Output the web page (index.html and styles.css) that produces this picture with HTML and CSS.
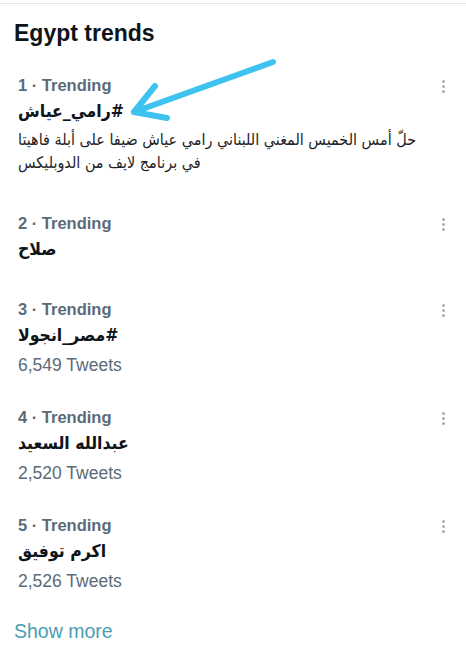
FILE: index.html
```html
<!DOCTYPE html>
<html lang="en">
<head>
  <meta charset="UTF-8">
  <meta name="viewport" content="width=device-width, initial-scale=1.0">
  <title>Egypt trends</title>
  <link rel="stylesheet" href="styles.css">
</head>
<body>
  <div class="topline"></div>

  <section class="panel">
    <h2 class="panel-title">Egypt trends</h2>

    <div class="trend">
      <div class="trend-body">
        <div class="trend-meta">1 · Trending</div>
        <div class="trend-name" dir="rtl">#رامي_عياش</div>
        <div class="trend-desc" dir="rtl">حلّ أمس الخميس المغني اللبناني رامي عياش ضيفا على أبلة فاهيتا في برنامج لايف من الدوبليكس</div>
      </div>
      <div class="trend-more"><span></span><span></span><span></span></div>
    </div>

    <div class="trend">
      <div class="trend-body">
        <div class="trend-meta">2 · Trending</div>
        <div class="trend-name" dir="rtl">صلاح</div>
      </div>
      <div class="trend-more"><span></span><span></span><span></span></div>
    </div>

    <div class="trend">
      <div class="trend-body">
        <div class="trend-meta">3 · Trending</div>
        <div class="trend-name" dir="rtl">#مصر_انجولا</div>
        <div class="trend-count">6,549 Tweets</div>
      </div>
      <div class="trend-more"><span></span><span></span><span></span></div>
    </div>

    <div class="trend">
      <div class="trend-body">
        <div class="trend-meta">4 · Trending</div>
        <div class="trend-name" dir="rtl">عبدالله السعيد</div>
        <div class="trend-count">2,520 Tweets</div>
      </div>
      <div class="trend-more"><span></span><span></span><span></span></div>
    </div>

    <div class="trend">
      <div class="trend-body">
        <div class="trend-meta">5 · Trending</div>
        <div class="trend-name" dir="rtl">اكرم توفيق</div>
        <div class="trend-count">2,526 Tweets</div>
      </div>
      <div class="trend-more"><span></span><span></span><span></span></div>
    </div>

    <a class="show-more" href="#">Show more</a>
  </section>

  <!-- hand drawn arrow on top of the screenshot -->
  <svg class="arrow" width="466" height="663" viewBox="0 0 466 663">
    <g fill="none" stroke="#3ec3f0" stroke-width="6" stroke-linecap="round" stroke-linejoin="round">
      <path d="M273 62 L134 112"/>
      <path d="M155 86 L134 112 L167 118"/>
    </g>
  </svg>
</body>
</html>
```

FILE: styles.css
```css
body {
  margin: 0;
  background: #fff;
  font-family: "Liberation Sans", "DejaVu Sans", sans-serif;
  color: #0f1419;
  position: relative;
  overflow: hidden;
}

.topline {
  margin-top: 3px;
  height: 1px;
  background: #e1e6e9;
}

.panel {
  display: flex;
  flex-direction: column;
}

.panel-title {
  margin: 15px 0 9px;
  padding: 0 14px;
  font-size: 23px;
  line-height: 28px;
  font-weight: bold;
  color: #0f1419;
}

.trend {
  display: flex;
  justify-content: space-between;
  padding: 17px 18px 14px 18px;
}

.trend-body {
  display: flex;
  flex-direction: column;
  flex: 1;
}

.trend-meta {
  font-size: 16.5px;
  line-height: 24px;
  font-weight: bold;
  color: #5b6b78;
}

.trend-name,
.trend-desc {
  font-family: "DejaVu Sans Condensed", "DejaVu Sans", sans-serif;
  text-align: left;
}

.trend-name {
  font-size: 17.5px;
  line-height: 28px;
  font-weight: bold;
  color: #0f1419;
}

.trend-name:last-child {
  margin-bottom: 3px;
}

.trend-desc {
  margin: 3px 0 6px;
  max-width: 410px;
  font-size: 16px;
  line-height: 23px;
  color: #1f2326;
}

.trend-count {
  margin-top: 7px;
  font-size: 17.5px;
  line-height: 18px;
  color: #5b6b78;
}

.trend-more {
  display: flex;
  flex-direction: column;
  gap: 2px;
  padding: 7px 3px 0 0;
}

.trend-more span {
  width: 3px;
  height: 3px;
  border-radius: 50%;
  background: #a3adb5;
}

.show-more {
  margin-top: 15px;
  padding: 0 14px;
  font-size: 19.5px;
  line-height: 24px;
  color: #4b9db3;
  text-decoration: none;
}

.arrow {
  position: absolute;
  top: 0;
  left: 0;
  pointer-events: none;
}
```
